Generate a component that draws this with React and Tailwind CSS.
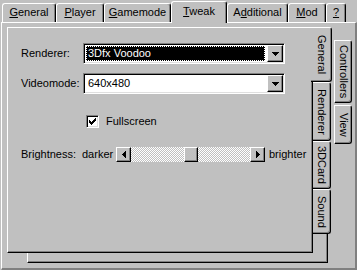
import React from 'react';

// classic 3d edges
const RAISED = 'border border-t-white border-l-white border-r-black border-b-black shadow-[inset_-1px_-1px_0_#808080]';
const SUNKEN = 'border border-t-[#808080] border-l-[#808080] border-r-white border-b-white shadow-[inset_1px_1px_0_#000,inset_-1px_-1px_0_#dfdfdf]';

function TopTab({ w, selected, children }) {
  return (
    <div
      className={`${w} flex justify-center bg-[#c0c0c0] border-l border-t border-r border-l-white border-t-white border-r-black rounded-t-[3px] shadow-[inset_-1px_0_0_#808080] ${
        selected ? 'relative z-10 -mb-px h-[22px] pt-[3px]' : 'h-[19px] pt-[2px]'
      }`}
    >
      <span>{children}</span>
    </div>
  );
}

function SideTab({ h, selected, outer, children }) {
  return (
    <div
      className={`${h} flex items-center justify-center bg-[#c0c0c0] border-t border-r border-b border-t-white border-r-black border-b-black rounded-r-[3px] shadow-[inset_-1px_-1px_0_#808080] ${
        selected ? '-ml-[2px] w-[21px]' : 'w-[18px]'
      } ${outer ? 'border-l border-l-white' : ''}`}
    >
      <span className="[writing-mode:vertical-rl]">{children}</span>
    </div>
  );
}

function DownArrow() {
  return (
    <svg width="7" height="4" shapeRendering="crispEdges">
      <path d="M0 0h7v1H0zM1 1h5v1H1zM2 2h3v1H2zM3 3h1v1H3z" fill="#000" />
    </svg>
  );
}

function Combo({ value, active }) {
  return (
    <div className={`w-[202px] h-[21px] bg-white p-px flex ${SUNKEN}`}>
      {active ? (
        <div className="flex-1 m-px mr-[2px] bg-black text-white pl-[2px] flex items-center outline-1 outline-dotted outline-white -outline-offset-1">
          {value}
        </div>
      ) : (
        <div className="flex-1 pl-[3px] flex items-center">{value}</div>
      )}
      <div className={`w-[16px] h-full flex items-center justify-center bg-[#c0c0c0] ${RAISED}`}>
        <DownArrow />
      </div>
    </div>
  );
}

function Check() {
  return (
    <div className={`w-[13px] h-[13px] bg-white flex items-center justify-center ${SUNKEN}`}>
      <svg width="7" height="7" shapeRendering="crispEdges">
        <path
          d="M0 2h1v3H0zM1 3h1v3H1zM2 4h1v3H2zM3 3h1v3H3zM4 2h1v3H4zM5 1h1v3H5zM6 0h1v3H6z"
          fill="#000"
        />
      </svg>
    </div>
  );
}

function ScrollBtn({ dir }) {
  return (
    <div className={`w-[15px] h-full flex items-center justify-center bg-[#c0c0c0] ${RAISED}`}>
      <svg width="4" height="7" shapeRendering="crispEdges">
        <path
          d={dir === 'left' ? 'M3 0h1v7H3zM2 1h1v5H2zM1 2h1v3H1zM0 3h1v1H0z' : 'M0 0h1v7H0zM1 1h1v5H1zM2 2h1v3H2zM3 3h1v1H3z'}
          fill="#000"
        />
      </svg>
    </div>
  );
}

function Track() {
  // dithered scrollbar trough
  return (
    <div className="relative flex-1 h-full bg-[#c0c0c0]">
      <svg className="absolute inset-0" width="100%" height="100%" shapeRendering="crispEdges">
        <defs>
          <pattern id="dither" width="2" height="2" patternUnits="userSpaceOnUse">
            <rect width="1" height="1" fill="#fff" />
            <rect x="1" y="1" width="1" height="1" fill="#fff" />
          </pattern>
        </defs>
        <rect width="100%" height="100%" fill="url(#dither)" />
      </svg>
      <div className={`relative ml-[53px] w-[14px] h-full bg-[#c0c0c0] ${RAISED}`} />
    </div>
  );
}

function Page() {
  return (
    <div className={`w-[306px] h-[226px] bg-[#c0c0c0] pl-[13px] pt-[15px] ${RAISED}`}>
      <div className="flex items-center h-[21px]">
        <span className="w-[62px]">Renderer:</span>
        <Combo value="3Dfx Voodoo" active />
      </div>
      <div className="flex items-center h-[21px] mt-[9px]">
        <span className="w-[62px]">Videomode:</span>
        <Combo value="640x480" />
      </div>
      <div className="flex items-center h-[13px] mt-[21px] ml-[65px]">
        <Check />
        <span className="ml-[7px]">Fullscreen</span>
      </div>
      <div className="flex items-center h-[15px] mt-[19px]">
        <span className="w-[61px]">Brightness:</span>
        <span className="w-[34px]">darker</span>
        <div className="flex h-[15px] w-[149px]">
          <ScrollBtn dir="left" />
          <Track />
          <ScrollBtn dir="right" />
        </div>
        <span className="ml-[4px]">brighter</span>
      </div>
    </div>
  );
}

export default function App() {
  return (
    <div className="w-[357px] h-[270px] overflow-hidden bg-[#c0c0c0] font-['Liberation_Sans',Arial,sans-serif] text-[11px] leading-[13px] text-black">
      {/* top tab strip */}
      <div className="flex items-end h-[22px] pl-[2px]">
        <TopTab w="w-[54px]"><u>G</u>eneral</TopTab>
        <TopTab w="w-[48px]"><u>P</u>layer</TopTab>
        <TopTab w="w-[67px]"><u>G</u>amemode</TopTab>
        <TopTab w="w-[56px]" selected><u>T</u>weak</TopTab>
        <TopTab w="w-[61px]">A<u>d</u>ditional</TopTab>
        <TopTab w="w-[38px]"><u>M</u>od</TopTab>
        <TopTab w="w-[20px]"><u>?</u></TopTab>
      </div>

      {/* outer sheet */}
      <div className="relative ml-px h-[248px] border-t border-l border-r-2 border-b-2 border-t-white border-l-white border-r-[#808080] border-b-[#808080] pl-[5px] pt-[4px]">
        {/* back row frame of the side tab control */}
        <div className="absolute left-[25px] right-[27px] top-[200px] bottom-[5px] border-l border-r border-b border-l-white border-r-black border-b-black shadow-[inset_-1px_-1px_0_#808080]" />

        <div className="relative z-10 flex items-start">
          <Page />
          <div className="flex flex-col w-[19px]">
            <SideTab h="h-[55px]" selected>General</SideTab>
            <SideTab h="h-[59px]">Renderer</SideTab>
            <SideTab h="h-[48px]">3DCard</SideTab>
            <SideTab h="h-[45px]">Sound</SideTab>
          </div>
          <div className="flex flex-col ml-[2px] pt-[13px]">
            <SideTab h="h-[63px]" outer>Controllers</SideTab>
            <div className="mt-[2px]">
              <SideTab h="h-[39px]" outer>View</SideTab>
            </div>
          </div>
        </div>
      </div>
    </div>
  );
}
